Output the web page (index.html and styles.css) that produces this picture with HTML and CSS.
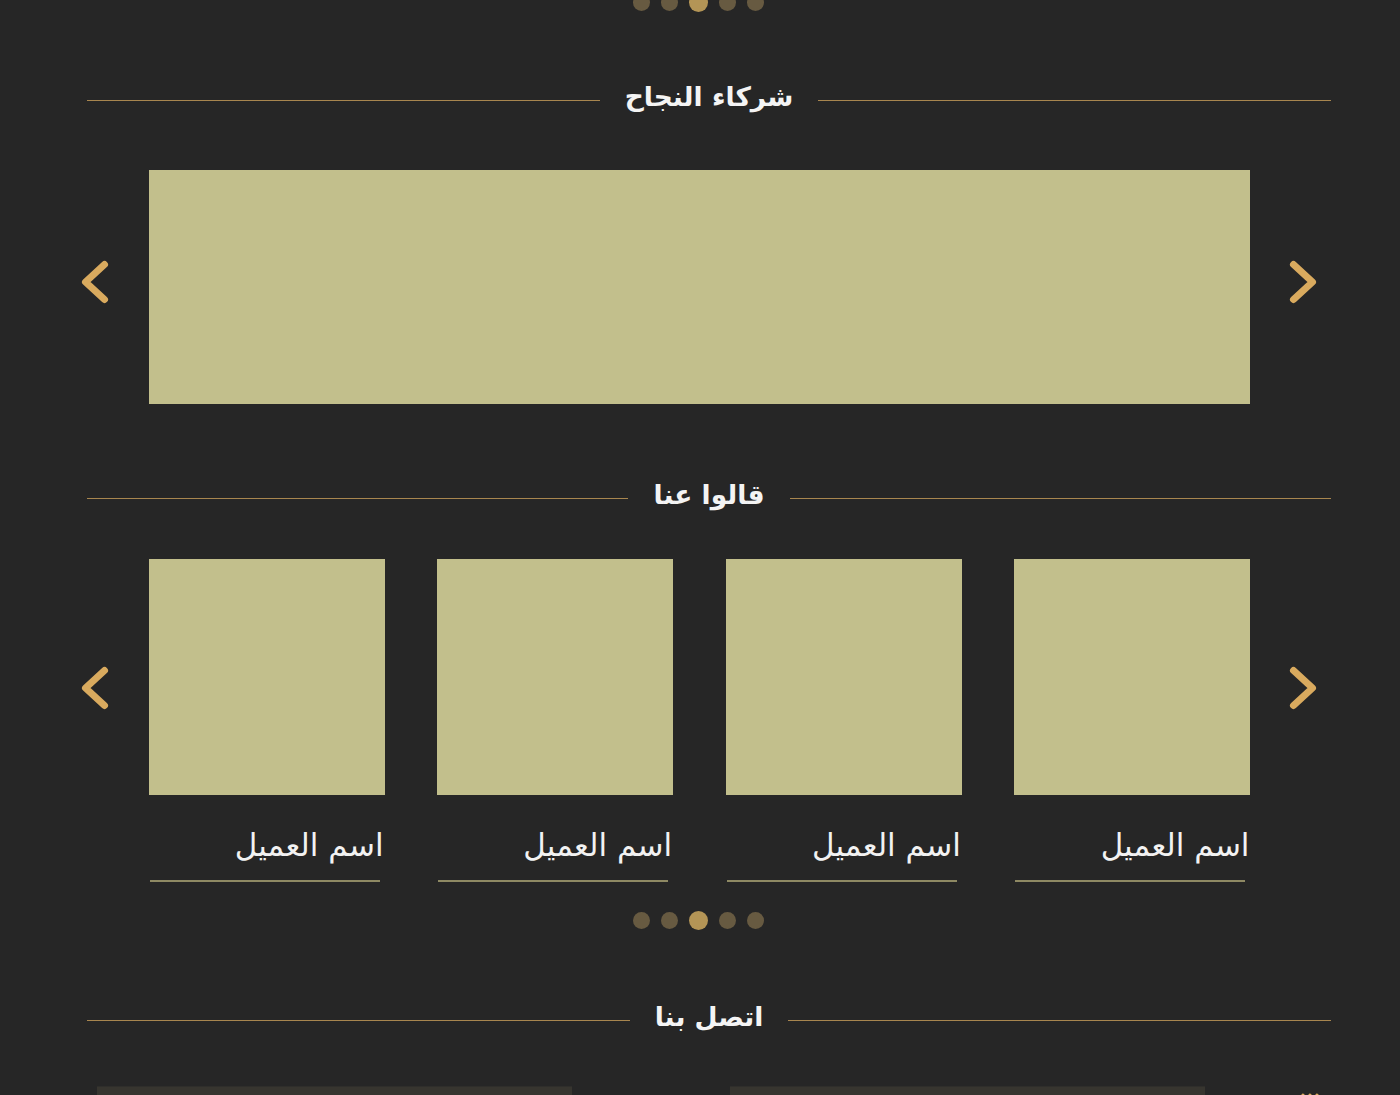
FILE: index.html
```html
<!DOCTYPE html>
<html lang="ar" dir="rtl">
<head>
<meta charset="utf-8">
<title>شركاء النجاح</title>
<link rel="stylesheet" href="styles.css">
</head>
<body>
<div class="page">
  <div class="dots dots-top">
    <span class="dot"></span><span class="dot"></span><span class="dot active"></span><span class="dot"></span><span class="dot"></span>
  </div>

  <div class="heading heading-first">
    <span class="hline"></span><h2 class="htext">شركاء النجاح</h2><span class="hline"></span>
  </div>

  <div class="carousel carousel-banner">
    <button class="arrow arrow-banner" aria-label="السابق"><svg viewBox="0 0 30 46" width="30" height="46"><path d="M24.5 5.5 L5.5 23 L24.5 40.5" fill="none" stroke="#d9aa5e" stroke-width="7" stroke-linecap="round" stroke-linejoin="round"/></svg></button>
    <div class="banner"></div>
    <button class="arrow arrow-banner" aria-label="التالي"><svg viewBox="0 0 30 46" width="30" height="46"><path d="M5.5 5.5 L24.5 23 L5.5 40.5" fill="none" stroke="#d9aa5e" stroke-width="7" stroke-linecap="round" stroke-linejoin="round"/></svg></button>
  </div>

  <div class="heading heading-second">
    <span class="hline"></span><h2 class="htext">قالوا عنا</h2><span class="hline"></span>
  </div>

  <div class="carousel carousel-cards">
    <button class="arrow arrow-cards" aria-label="السابق"><svg viewBox="0 0 30 46" width="30" height="46"><path d="M24.5 5.5 L5.5 23 L24.5 40.5" fill="none" stroke="#d9aa5e" stroke-width="7" stroke-linecap="round" stroke-linejoin="round"/></svg></button>
    <div class="cards">
      <div class="card"><div class="photo"></div><div class="name">اسم العميل</div><div class="uline"></div></div>
      <div class="card"><div class="photo"></div><div class="name">اسم العميل</div><div class="uline"></div></div>
      <div class="card"><div class="photo"></div><div class="name">اسم العميل</div><div class="uline"></div></div>
      <div class="card"><div class="photo"></div><div class="name">اسم العميل</div><div class="uline"></div></div>
    </div>
    <button class="arrow arrow-cards" aria-label="التالي"><svg viewBox="0 0 30 46" width="30" height="46"><path d="M5.5 5.5 L24.5 23 L5.5 40.5" fill="none" stroke="#d9aa5e" stroke-width="7" stroke-linecap="round" stroke-linejoin="round"/></svg></button>
  </div>

  <div class="dots dots-bottom">
    <span class="dot"></span><span class="dot"></span><span class="dot active"></span><span class="dot"></span><span class="dot"></span>
  </div>

  <div class="heading heading-third">
    <span class="hline"></span><h2 class="htext">اتصل بنا</h2><span class="hline"></span>
  </div>

  <div class="contact">
    <div class="field"></div>
    <div class="field"></div>
    <span class="cicon"><svg viewBox="0 0 26 10" width="26" height="10"><path d="M4 10 L8 2 M11 10 L15 2 M18 10 L22 2" stroke="#d9aa5e" stroke-width="3" stroke-linecap="round"/></svg></span>
  </div>
</div>
</body>
</html>
```

FILE: styles.css
```css
html, body {
  margin: 0;
  padding: 0;
  background: #262626;
  overflow: hidden;
}
body {
  font-family: "DejaVu Sans", "Noto Sans", sans-serif;
  color: #f2f2f2;
}
.page {
  width: 1400px;
  height: 1095px;
  overflow: hidden;
  direction: ltr;
}
.dots {
  display: flex;
  flex-direction: row;
  justify-content: center;
  align-items: center;
  gap: 11px;
  height: 19px;
  transform: translateX(-2px);
}
.dot {
  width: 17px;
  height: 17px;
  border-radius: 50%;
  background: #675a41;
}
.dot.active {
  width: 19px;
  height: 19px;
  background: #b49556;
}
.dots-top {
  margin-top: -7px;
}
.heading {
  display: flex;
  align-items: center;
  margin-left: 87px;
  width: 1244px;
  height: 40px;
}
.hline {
  flex: 1;
  height: 1px;
  background: #a8864f;
}
.htext {
  margin: 0;
  padding: 0 25px;
  font-size: 26.5px;
  font-weight: bold;
  color: #f4f4f4;
  line-height: 40px;
  direction: rtl;
  position: relative;
  top: -3px;
}
.heading-first { margin-top: 68px; }
.heading-second { margin-top: 74px; }
.heading-third { margin-top: 70px; }

.carousel {
  display: flex;
  align-items: center;
  margin-left: 80px;
  width: 1238px;
  justify-content: space-between;
}
.carousel-banner {
  margin-top: 50px;
}
.arrow {
  width: 30px;
  height: 46px;
  padding: 0;
  border: 0;
  background: none;
  display: flex;
}
.arrow-banner {
  margin-top: -10px;
}
.banner {
  width: 1101px;
  height: 234px;
  background: #c2bf8c;
}
.carousel-cards {
  align-items: flex-start;
  margin-top: 41px;
}
.arrow-cards {
  margin-top: 106px;
}
.cards {
  display: flex;
  gap: 52.67px;
  width: 1102px;
  margin-left: 1px;
}
.card {
  width: 236px;
  display: flex;
  flex-direction: column;
  align-items: stretch;
}
.photo {
  width: 236px;
  height: 236px;
  background: #c2bf8c;
}
.name {
  direction: rtl;
  text-align: right;
  font-size: 31px;
  line-height: 40px;
  margin-top: 30px;
  padding-right: 1px;
  color: #f2f2f2;
}
.uline {
  height: 2px;
  background: #8e8963;
  margin-top: 15px;
  margin-left: 1px;
  margin-right: 5px;
}
.dots-bottom {
  margin-top: 29px;
}
.contact {
  display: flex;
  align-items: flex-start;
  margin-top: 46px;
  padding-left: 97px;
}
.field {
  width: 475px;
  height: 50px;
  background: #37352f;
  border-top: 1px solid #2f2e2b;
}
.field + .field {
  margin-left: 158px;
}
.cicon {
  display: block;
  width: 26px;
  height: 10px;
  margin-top: 2px;
  margin-left: 90px;
}
```
